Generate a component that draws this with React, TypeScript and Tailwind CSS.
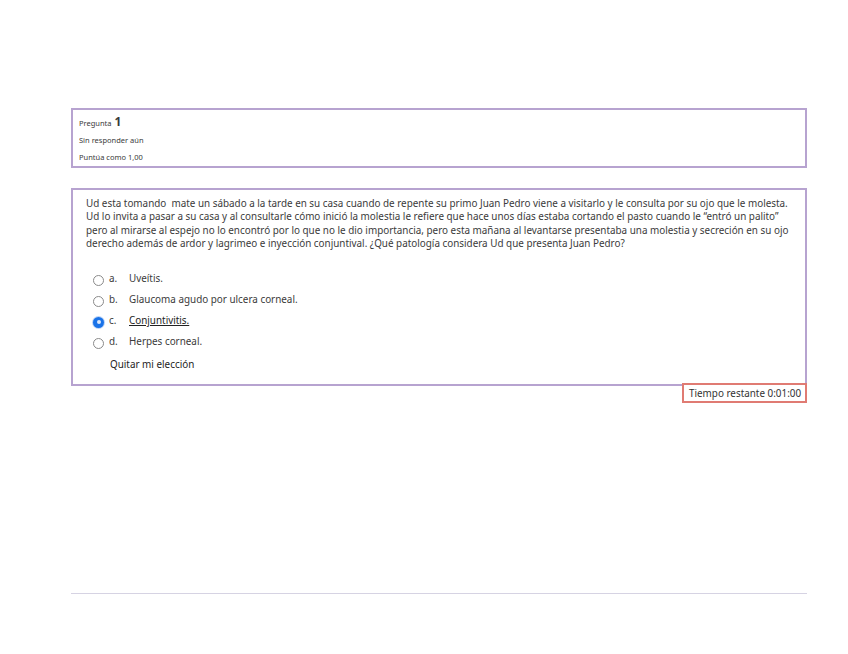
import React from 'react';

const lines = [
  'Ud esta tomando  mate un sábado a la tarde en su casa cuando de repente su primo Juan Pedro viene a visitarlo y le consulta por su ojo que le molesta.',
  'Ud lo invita a pasar a su casa y al consultarle cómo inició la molestia le refiere que hace unos días estaba cortando el pasto cuando le “entró un palito”',
  'pero al mirarse al espejo no lo encontró por lo que no le dio importancia, pero esta mañana al levantarse presentaba una molestia y secreción en su ojo',
  'derecho además de ardor y lagrimeo e inyección conjuntival. ¿Qué patología considera Ud que presenta Juan Pedro?',
];

const options = [
  { letter: 'a.', text: 'Uveítis.', checked: false },
  { letter: 'b.', text: 'Glaucoma agudo por ulcera corneal.', checked: false },
  { letter: 'c.', text: 'Conjuntivitis.', checked: true },
  { letter: 'd.', text: 'Herpes corneal.', checked: false },
];

function Radio({ checked }: { checked: boolean }) {
  if (checked) {
    return (
      <span className="block w-[11px] h-[11px] rounded-full bg-[#1a73e8] shadow-[0_0_0_1px_#bcd4f7] flex items-center justify-center">
        <span className="block w-[4px] h-[4px] rounded-full bg-[#dbe8fb]" />
      </span>
    );
  }
  return <span className="block w-[11px] h-[11px] rounded-full border border-[#8a8a8a] bg-white" />;
}

export default function App() {
  return (
    <div className="min-h-[654px] bg-white text-[#3a3a3a] font-['Noto_Sans',sans-serif]">
      <div className="ml-[71px] w-[736px] pt-[108px]">
        {/* info */}
        <div className="h-[60px] border-2 border-[#b7a3d0] px-[6px] pt-[6px]">
          <div className="flex items-baseline gap-[3px] h-[16px]">
            <span className="text-[7.5px]">Pregunta</span>
            <span className="text-[12px] font-bold leading-none">1</span>
          </div>
          <div className="text-[7.5px] leading-[17px]">Sin responder aún</div>
          <div className="text-[7.5px] leading-[17px]">Puntúa como 1,00</div>
        </div>

        {/* content */}
        <div className="mt-[20px] h-[198px] border-2 border-[#b7a3d0] pl-[13px] pr-[10px] pt-[7px]">
          <div className="text-[9.9px] leading-[13.3px]">
            {lines.map((l) => (
              <div key={l} className="whitespace-pre">{l}</div>
            ))}
          </div>
          <div className="mt-[22px] flex flex-col gap-[8px] pl-[7px]">
            {options.map((o) => (
              <div key={o.letter} className="flex items-center h-[13px] text-[9.9px]">
                <span className="mt-[3px]"><Radio checked={o.checked} /></span>
                <span className="ml-[5px] w-[20px]">{o.letter}</span>
                <span className={o.checked ? 'underline text-[#222]' : ''}>{o.text}</span>
              </div>
            ))}
          </div>
          <div className="mt-[9px] pl-[24px] text-[9.9px] text-[#222]">Quitar mi elección</div>
        </div>

        <div className="flex justify-end -mt-[3px]">
          <div className="h-[20px] w-[125px] border-2 border-[#e07b73] bg-white flex items-center pl-[5px] text-[9.9px] text-[#333] whitespace-nowrap">
            Tiempo restante 0:01:00
          </div>
        </div>

        <div className="mt-[190px] h-px bg-[#d6d3e3]" />
      </div>
    </div>
  );
}
